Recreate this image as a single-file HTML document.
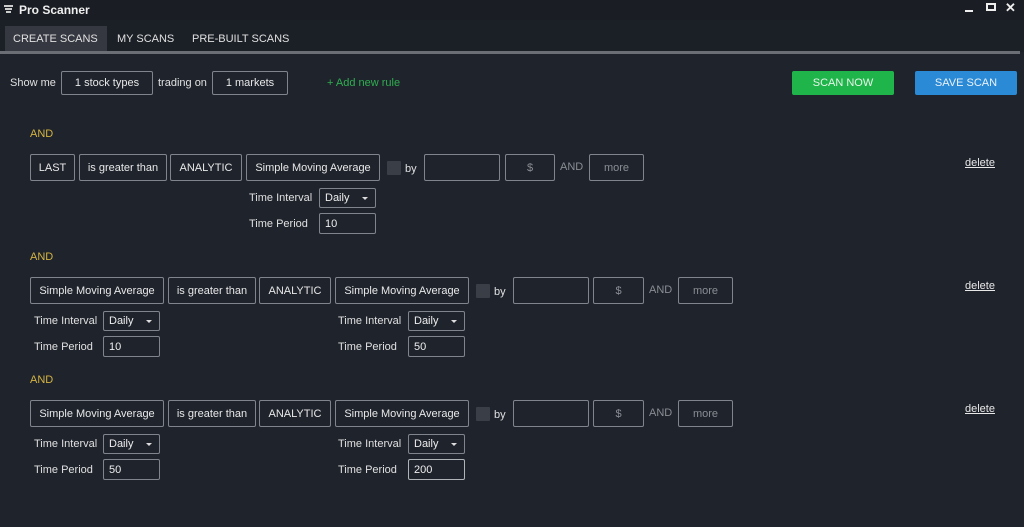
<!DOCTYPE html><html><head><style>
body{margin:0;width:1024px;height:527px;background:#1f232c;font-family:"Liberation Sans",sans-serif;color:#e6e6e6;position:relative;overflow:hidden;font-size:11px}
div,span{position:absolute;box-sizing:border-box}
.b{border:1px solid #80848c;border-radius:2px;text-align:center;color:#e8e8e8;font-size:11px;padding-top:1px}
.t{font-size:11px;color:#e0e0e0;white-space:nowrap;margin-top:1px}
.g{color:#8a8d93}
.and{color:#d4b441;font-size:11px;margin-top:1px}
.cb{width:14px;height:14px;background:#3a3e46;border-radius:1px}
.sel,.inp{border:1px solid #80848c;border-radius:2px;padding-left:5px;font-size:11px;color:#eee;padding-top:1px}
.sel:after{content:"";position:absolute;right:7px;top:8px;border-left:3px solid transparent;border-right:3px solid transparent;border-top:3px solid #ddd}
.del{color:#e8e8e8;text-decoration:underline;font-size:11px;margin-top:1px}
</style></head><body>
<div style="left:0;top:0;width:1024px;height:20px;background:#1a1d24"></div>
<div style="left:4px;top:5px;width:9px;height:2px;background:#ccc"></div>
<div style="left:5px;top:8px;width:7px;height:2px;background:#ccc"></div>
<div style="left:6px;top:11px;width:5px;height:2px;background:#ccc"></div>
<div style="left:19px;top:3px;font-weight:bold;font-size:12px;color:#eee">Pro Scanner</div>
<div style="left:965px;top:10px;width:8px;height:2px;background:#eee"></div>
<div style="left:986px;top:3px;width:10px;height:8px;border:2px solid #eee"></div>
<div style="left:1005px;top:0px;font-size:13px;font-weight:bold;color:#eee">✕</div>
<div style="left:0;top:20px;width:1024px;height:32px;background:#1b1f26"></div>
<div style="left:5px;top:26px;width:102px;height:26px;background:#353840"></div>
<div class="t" style="left:13px;top:32px;font-size:11px">CREATE SCANS</div>
<div class="t" style="left:117px;top:32px">MY SCANS</div>
<div class="t" style="left:192px;top:32px">PRE-BUILT SCANS</div>
<div style="left:0;top:51px;width:1020px;height:3px;background:#6b6e75"></div>
<div class="t" style="left:10px;top:76px">Show me</div>
<div class="b" style="left:61px;top:71px;width:92px;height:24px;line-height:21px">1 stock types</div>
<div class="t" style="left:158px;top:76px">trading on</div>
<div class="b" style="left:212px;top:71px;width:76px;height:24px;line-height:21px">1 markets</div>
<div class="t" style="left:327px;top:76px;color:#2fae4f">+ Add new rule</div>
<div style="left:792px;top:71px;width:102px;height:24px;background:#1fb54b;border-radius:2px;text-align:center;line-height:24px;color:#e8f5ea">SCAN NOW</div>
<div style="left:915px;top:71px;width:102px;height:24px;background:#2a8ad6;border-radius:2px;text-align:center;line-height:24px;color:#eaf2fa">SAVE SCAN</div>

<div class="and" style="left:30px;top:127px">AND</div>
<div class="b" style="left:30px;top:154px;width:45px;height:27px;line-height:24px">LAST</div>
<div class="b" style="left:79px;top:154px;width:88px;height:27px;line-height:24px">is greater than</div>
<div class="b" style="left:170px;top:154px;width:72px;height:27px;line-height:24px">ANALYTIC</div>
<div class="b" style="left:246px;top:154px;width:134px;height:27px;line-height:24px">Simple Moving Average</div>
<div class="cb" style="left:387px;top:161px"></div>
<div class="t" style="left:405px;top:162px">by</div>
<div class="b" style="left:424px;top:154px;width:76px;height:27px"></div>
<div class="b g" style="left:505px;top:154px;width:50px;height:27px;line-height:24px">$</div>
<div class="t g" style="left:560px;top:160px">AND</div>
<div class="b g" style="left:589px;top:154px;width:55px;height:27px;line-height:24px">more</div>
<div class="del" style="left:965px;top:156px">delete</div>
<div class="t" style="left:249px;top:191px">Time Interval</div>
<div class="sel" style="left:319px;top:188px;width:57px;height:20px;line-height:17px">Daily</div>
<div class="t" style="left:249px;top:217px">Time Period</div>
<div class="inp" style="left:319px;top:213px;width:57px;height:21px;line-height:18px">10</div>

<div class="and" style="left:30px;top:250px">AND</div>
<div class="b" style="left:30px;top:277px;width:134px;height:27px;line-height:24px">Simple Moving Average</div>
<div class="b" style="left:168px;top:277px;width:88px;height:27px;line-height:24px">is greater than</div>
<div class="b" style="left:259px;top:277px;width:72px;height:27px;line-height:24px">ANALYTIC</div>
<div class="b" style="left:335px;top:277px;width:134px;height:27px;line-height:24px">Simple Moving Average</div>
<div class="cb" style="left:476px;top:284px"></div>
<div class="t" style="left:494px;top:285px">by</div>
<div class="b" style="left:513px;top:277px;width:76px;height:27px"></div>
<div class="b g" style="left:593px;top:277px;width:51px;height:27px;line-height:24px">$</div>
<div class="t g" style="left:649px;top:283px">AND</div>
<div class="b g" style="left:678px;top:277px;width:55px;height:27px;line-height:24px">more</div>
<div class="del" style="left:965px;top:279px">delete</div>
<div class="t" style="left:34px;top:314px">Time Interval</div>
<div class="sel" style="left:103px;top:311px;width:57px;height:20px;line-height:17px">Daily</div>
<div class="t" style="left:34px;top:340px">Time Period</div>
<div class="inp" style="left:103px;top:336px;width:57px;height:21px;line-height:18px">10</div>
<div class="t" style="left:338px;top:314px">Time Interval</div>
<div class="sel" style="left:408px;top:311px;width:57px;height:20px;line-height:17px">Daily</div>
<div class="t" style="left:338px;top:340px">Time Period</div>
<div class="inp" style="left:408px;top:336px;width:57px;height:21px;line-height:18px">50</div>

<div class="and" style="left:30px;top:373px">AND</div>
<div class="b" style="left:30px;top:400px;width:134px;height:27px;line-height:24px">Simple Moving Average</div>
<div class="b" style="left:168px;top:400px;width:88px;height:27px;line-height:24px">is greater than</div>
<div class="b" style="left:259px;top:400px;width:72px;height:27px;line-height:24px">ANALYTIC</div>
<div class="b" style="left:335px;top:400px;width:134px;height:27px;line-height:24px">Simple Moving Average</div>
<div class="cb" style="left:476px;top:407px"></div>
<div class="t" style="left:494px;top:408px">by</div>
<div class="b" style="left:513px;top:400px;width:76px;height:27px"></div>
<div class="b g" style="left:593px;top:400px;width:51px;height:27px;line-height:24px">$</div>
<div class="t g" style="left:649px;top:406px">AND</div>
<div class="b g" style="left:678px;top:400px;width:55px;height:27px;line-height:24px">more</div>
<div class="del" style="left:965px;top:402px">delete</div>
<div class="t" style="left:34px;top:437px">Time Interval</div>
<div class="sel" style="left:103px;top:434px;width:57px;height:20px;line-height:17px">Daily</div>
<div class="t" style="left:34px;top:463px">Time Period</div>
<div class="inp" style="left:103px;top:459px;width:57px;height:21px;line-height:18px">50</div>
<div class="t" style="left:338px;top:437px">Time Interval</div>
<div class="sel" style="left:408px;top:434px;width:57px;height:20px;line-height:17px">Daily</div>
<div class="t" style="left:338px;top:463px">Time Period</div>
<div class="inp" style="left:408px;top:459px;width:57px;height:21px;line-height:18px;border-color:#b0b3b8">200</div>
</body></html>
